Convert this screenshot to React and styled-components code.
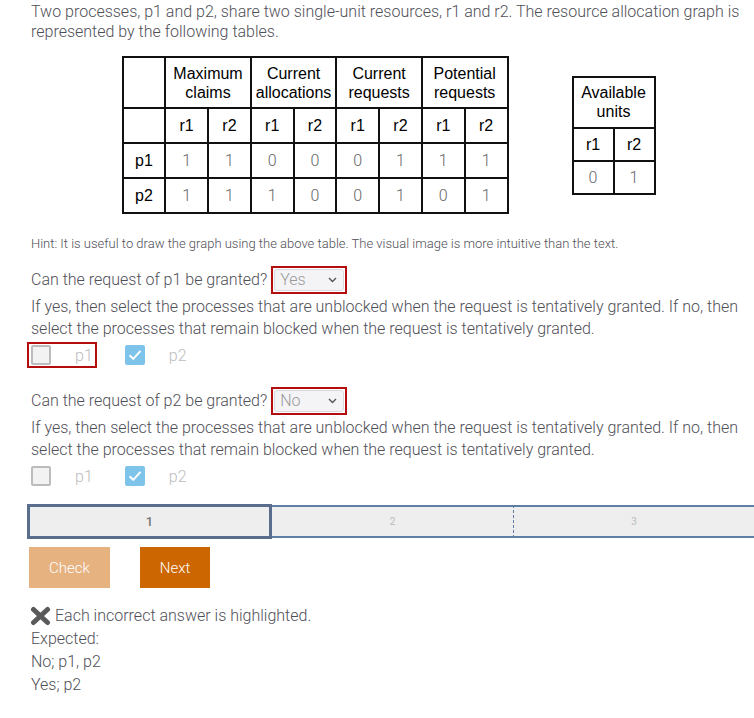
import React from 'react';
import styled, { createGlobalStyle } from 'styled-components';

const GlobalStyle = createGlobalStyle`
  html, body {
    margin: 0;
    padding: 0;
    background: #fff;
  }
  body {
    font-family: Roboto, "Liberation Sans", sans-serif;
    font-weight: 300;
    color: #4f4f57;
  }
`;

const Page = styled.div`
  padding: 2px 8px 20px 31px;
  width: 754px;
  box-sizing: border-box;
  overflow: hidden;
`;

const Intro = styled.p`
  margin: 0;
  font-size: 16px;
  line-height: 20px;
`;

const Tables = styled.div`
  display: flex;
  align-items: center;
  justify-content: center;
  gap: 63px;
  margin-top: 14px;
`;

const Grid = styled.table`
  border-collapse: collapse;
  table-layout: fixed;
  width: ${p => p.$w}px;
  font-family: "Liberation Sans", Arial, sans-serif;
  font-weight: 400;
  font-size: 16px;
  color: #000;
`;

const Head = styled.th`
  border: 2px solid #111;
  font-weight: 400;
  line-height: 19px;
  height: ${p => p.$h || 33}px;
  padding: 0;
  text-align: center;
  white-space: nowrap;
`;

const Cell = styled.td`
  border: 2px solid #111;
  height: ${p => p.$h || 33}px;
  padding: 0;
  text-align: center;
  font-family: Roboto, sans-serif;
  font-weight: 300;
  color: #666;
`;

const Hint = styled.p`
  margin: 22px 0 0;
  font-size: 13px;
  line-height: 16px;
`;

const Question = styled.div`
  display: flex;
  align-items: center;
  gap: 4px;
  font-size: 16px;
  line-height: 22px;
  margin-top: ${p => p.$top}px;
`;

const SelectWrap = styled.div`
  border: 2px solid #b30d0d;
  width: 76px;
  height: 28px;
  box-sizing: border-box;
  padding: 1px;
  display: flex;
`;

const SelectBox = styled.div`
  flex: 1;
  display: flex;
  align-items: center;
  justify-content: space-between;
  background: #f4f4f6;
  border: 1px solid #d8d8de;
  border-radius: 3px;
  padding: 0 6px 0 5px;
  color: #9a9a9a;
  font-size: 16px;
`;

const Para = styled.p`
  margin: 2px 0 0;
  font-size: 16px;
  line-height: 22px;
`;

const Choices = styled.div`
  display: flex;
  align-items: center;
  gap: 24px;
  margin-top: 2px;
  margin-left: -4px;
  height: 26px;
`;

const Choice = styled.label`
  display: flex;
  align-items: center;
  gap: 24px;
  height: 26px;
  box-sizing: border-box;
  padding: 0 2px 0 2px;
  border: 2px solid ${p => (p.$wrong ? '#b30d0d' : 'transparent')};
  color: #bdbdbd;
  font-size: 16px;
`;

const Box = styled.span`
  width: 20px;
  height: 20px;
  box-sizing: border-box;
  border-radius: 2px;
  display: flex;
  align-items: center;
  justify-content: center;
  background: ${p => (p.$checked ? '#7dc3ea' : '#f2f2f2')};
  border: ${p => (p.$checked ? 'none' : '2px solid #bcbcbc')};
`;

const Progress = styled.div`
  display: flex;
  margin: 15px -8px 0 -4px;
  height: 35px;
`;

const Segment = styled.div`
  box-sizing: border-box;
  width: ${p => (p.$grow ? 'auto' : `${p.$w}px`)};
  flex: ${p => (p.$grow ? 1 : 'none')};
  display: flex;
  align-items: center;
  justify-content: center;
  background: #eee;
  border: ${p => (p.$active ? '3px solid #5a6d8c' : 'none')};
  border-top: ${p => (p.$active ? '3px solid #5a6d8c' : '2px solid #5f7ea6')};
  border-bottom: ${p => (p.$active ? '3px solid #5a6d8c' : '2px solid #5f7ea6')};
  border-left: ${p => (p.$dashed ? '1px dashed #5f7ea6' : p.$active ? '3px solid #5a6d8c' : 'none')};
  height: ${p => (p.$active ? 35 : 33)}px;
  margin-top: ${p => (p.$active ? 0 : 1)}px;
  font-size: ${p => (p.$active ? 13 : 10)}px;
  font-weight: ${p => (p.$active ? 500 : 400)};
  color: ${p => (p.$active ? '#777' : '#bbb')};
`;

const Buttons = styled.div`
  display: flex;
  gap: 30px;
  margin-top: 8px;
  margin-left: -2px;
`;

const Button = styled.button`
  border: none;
  height: 41px;
  padding: 0 ${p => p.$pad}px;
  font-family: Roboto, sans-serif;
  font-weight: 300;
  font-size: 15px;
  color: #fff;
  background: ${p => (p.$primary ? '#cc6600' : '#e6b280')};
`;

const Feedback = styled.div`
  margin-top: 16px;
  font-size: 16px;
  line-height: 23px;
`;

const FeedbackLine = styled.div`
  display: flex;
  align-items: center;
  gap: 4px;
  margin-left: -1px;
`;

const Chevron = () => (
  <svg width="9" height="6" viewBox="0 0 9 6">
    <path d="M1 1l3.5 3.5L8 1" fill="none" stroke="#555" strokeWidth="1.4" />
  </svg>
);

const Check = () => (
  <svg width="14" height="12" viewBox="0 0 14 12">
    <path d="M1.5 6.2l3.8 3.6L12.5 1.8" fill="none" stroke="#fff" strokeWidth="2" />
  </svg>
);

const Cross = () => (
  <svg width="21" height="20" viewBox="0 0 21 20">
    <path d="M3.5 3.5l14 13M17.5 3.5l-14 13" stroke="#5a5a5a" strokeWidth="5" strokeLinecap="round" />
  </svg>
);

const rows = [
  ['p1', [1, 1, 0, 0, 0, 1, 1, 1]],
  ['p2', [1, 1, 1, 0, 0, 1, 0, 1]],
];

const groups = [
  ['Maximum', 'claims'],
  ['Current', 'allocations'],
  ['Current', 'requests'],
  ['Potential', 'requests'],
];

const QuestionBlock = ({ proc, answer, wrongP1, top }) => (
  <>
    <Question $top={top}>
      Can the request of {proc} be granted?
      <SelectWrap>
        <SelectBox>
          {answer}
          <Chevron />
        </SelectBox>
      </SelectWrap>
    </Question>
    <Para>
      If yes, then select the processes that are unblocked when the request is tentatively granted. If no, then
      select the processes that remain blocked when the request is tentatively granted.
    </Para>
    <Choices>
      <Choice $wrong={wrongP1}>
        <Box />
        p1
      </Choice>
      <Choice>
        <Box $checked>
          <Check />
        </Box>
        p2
      </Choice>
    </Choices>
  </>
);

export default function App() {
  return (
    <Page>
      <GlobalStyle />
      <Intro>
        Two processes, p1 and p2, share two single-unit resources, r1 and r2. The resource allocation graph is
        represented by the following tables.
      </Intro>
      <Tables>
        <Grid $w={387}>
          <tbody>
            <tr>
              <Head $h={49} />
              {groups.map(([a, b], i) => (
                <Head key={i} colSpan={2} $h={49}>
                  {a}
                  <br />
                  {b}
                </Head>
              ))}
            </tr>
            <tr>
              <Head />
              {groups.map((_, i) => (
                <React.Fragment key={i}>
                  <Head>r1</Head>
                  <Head>r2</Head>
                </React.Fragment>
              ))}
            </tr>
            {rows.map(([name, vals]) => (
              <tr key={name}>
                <Head>{name}</Head>
                {vals.map((v, i) => (
                  <Cell key={i}>{v}</Cell>
                ))}
              </tr>
            ))}
          </tbody>
        </Grid>
        <Grid $w={84}>
          <tbody>
            <tr>
              <Head colSpan={2} $h={49}>
                Available
                <br />
                units
              </Head>
            </tr>
            <tr>
              <Head $h={31}>r1</Head>
              <Head $h={31}>r2</Head>
            </tr>
            <tr>
              <Cell $h={31}>0</Cell>
              <Cell $h={31}>1</Cell>
            </tr>
          </tbody>
        </Grid>
      </Tables>
      <Hint>
        Hint: It is useful to draw the graph using the above table. The visual image is more intuitive than the text.
      </Hint>
      <QuestionBlock proc="p1" answer="Yes" wrongP1 top={14} />
      <QuestionBlock proc="p2" answer="No" top={19} />
      <Progress>
        <Segment $active $w={245}>1</Segment>
        <Segment $w={241}>2</Segment>
        <Segment $dashed $grow>3</Segment>
      </Progress>
      <Buttons>
        <Button $pad={20}>Check</Button>
        <Button $primary $pad={20}>Next</Button>
      </Buttons>
      <Feedback>
        <FeedbackLine>
          <Cross />
          Each incorrect answer is highlighted.
        </FeedbackLine>
        <div>Expected:</div>
        <div>No; p1, p2</div>
        <div>Yes; p2</div>
      </Feedback>
    </Page>
  );
}
